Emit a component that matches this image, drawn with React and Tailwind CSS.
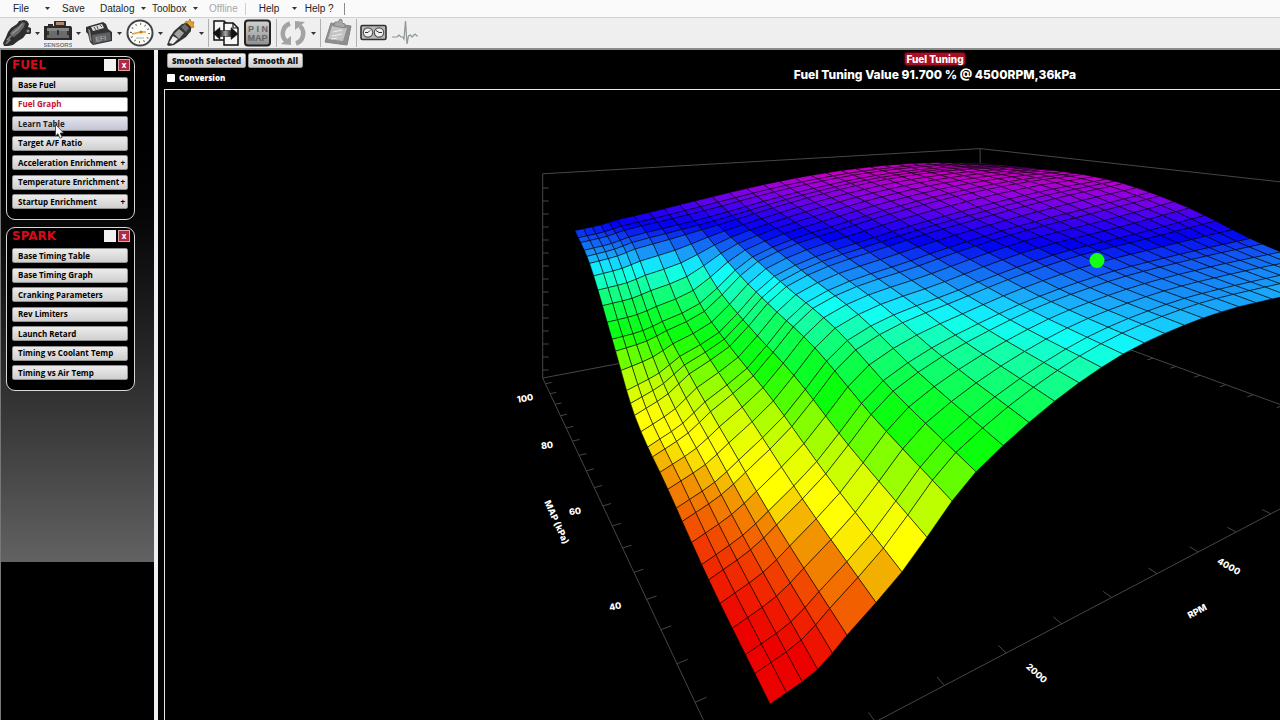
import React, { useState } from 'react';

const MENUS = [
  { label: 'File', width: 'w-[49px]', caret: 'pr-[12px]' },
  { label: 'Save', width: 'w-[38px]' },
  { label: 'Datalog', width: 'w-[52px]', caret: 'pr-[6px]' },
  { label: 'Toolbox', width: 'w-[52px]', caret: 'pr-[6px]' },
];

const FUEL_ITEMS = [
  { label: 'Base Fuel' },
  { label: 'Fuel Graph' },
  { label: 'Learn Table' },
  { label: 'Target A/F Ratio' },
  { label: 'Acceleration Enrichment', more: true },
  { label: 'Temperature Enrichment', more: true },
  { label: 'Startup Enrichment', more: true },
];

const SPARK_ITEMS = [
  { label: 'Base Timing Table' },
  { label: 'Base Timing Graph' },
  { label: 'Cranking Parameters' },
  { label: 'Rev Limiters' },
  { label: 'Launch Retard' },
  { label: 'Timing vs Coolant Temp' },
  { label: 'Timing vs Air Temp' },
];

/* ---------- surface data ---------- */

// rpm breakpoints, measured from the corner of the box
const RPM = [
  245, 345, 443, 541, 638, 735, 936, 1124, 1313, 1511, 1709, 1943, 2178, 2422, 2666, 2900,
  3137, 3380, 3625, 3870, 4113, 4362, 4612, 4861, 5110, 5360, 5610, 5860, 6110, 6360, 6610,
];

const MAP_STEPS = [3, 2, 3, 3, 3, 2, 3, 3, 2, 3, 3, 3, 2, 3, 3, 2, 2, 3, 3, 2, 3, 3, 3, 3, 3, 2, 2, 3, 2, 3];
const MAP = MAP_STEPS.reduce((list, step) => [...list, list[list.length - 1] + step], [67.4]);

const KNOT_COLS = [0, 3, 5, 7, 10, 15, 20, 25, 30];
const KNOT_ROWS = [0, 5, 10, 15, 20, 25, 30];

// one line per knot column, low MAP to high MAP
const HEIGHTS = [
  [0.07, 0.107, 0.157, 0.211, 0.327, 0.47, 0.53],
  [0.089, 0.135, 0.187, 0.245, 0.336, 0.482, 0.54],
  [0.122, 0.165, 0.22, 0.283, 0.352, 0.497, 0.552],
  [0.187, 0.233, 0.288, 0.332, 0.385, 0.515, 0.567],
  [0.311, 0.362, 0.425, 0.462, 0.497, 0.545, 0.593],
  [0.433, 0.457, 0.49, 0.533, 0.57, 0.607, 0.64],
  [0.478, 0.5, 0.54, 0.58, 0.62, 0.65, 0.668],
  [0.479, 0.515, 0.565, 0.618, 0.65, 0.665, 0.672],
  [0.468, 0.52, 0.594, 0.645, 0.659, 0.655, 0.65],
];

const RAMP = [
  [0.09, 236, 0, 0],
  [0.12, 240, 48, 0],
  [0.145, 242, 100, 0],
  [0.17, 242, 155, 0],
  [0.182, 245, 200, 0],
  [0.195, 255, 255, 0],
  [0.215, 255, 255, 0],
  [0.26, 185, 255, 0],
  [0.3, 95, 255, 0],
  [0.33, 10, 255, 10],
  [0.365, 10, 255, 50],
  [0.395, 15, 255, 110],
  [0.425, 20, 255, 170],
  [0.45, 15, 255, 245],
  [0.466, 20, 220, 255],
  [0.482, 25, 170, 250],
  [0.5, 20, 120, 245],
  [0.52, 15, 65, 240],
  [0.542, 0, 0, 240],
  [0.57, 45, 0, 240],
  [0.6, 110, 0, 232],
  [0.63, 155, 0, 220],
  [0.66, 195, 0, 195],
];

const BOX = { rpm: 7088, map: 158, top: 0.697 };

function hermite(xs, ys, x) {
  const n = xs.length;
  let k = 0;
  while (k < n - 2 && x > xs[k + 1]) k++;
  const secant = (i) => (ys[i + 1] - ys[i]) / (xs[i + 1] - xs[i]);
  const slope = (i) => {
    if (i === 0) return secant(0);
    if (i === n - 1) return secant(n - 2);
    return (ys[i + 1] - ys[i - 1]) / (xs[i + 1] - xs[i - 1]);
  };
  const d = xs[k + 1] - xs[k];
  const t = (x - xs[k]) / d;
  const t2 = t * t;
  const t3 = t2 * t;
  return (
    (2 * t3 - 3 * t2 + 1) * ys[k] +
    (t3 - 2 * t2 + t) * d * slope(k) +
    (3 * t2 - 2 * t3) * ys[k + 1] +
    (t3 - t2) * d * slope(k + 1)
  );
}

function heightAt(i, j) {
  const rows = KNOT_ROWS.map((r) => MAP[r]);
  const cols = KNOT_COLS.map((c) => RPM[c]);
  return hermite(cols, HEIGHTS.map((line) => hermite(rows, line, MAP[j])), RPM[i]);
}

function project(r, m, h) {
  const w = 1.90476e-7 * r + 2.15983e-5 * m;
  return [(3.973e-4 * r + 0.0087473 * m + 0.46991) / w, 85 + (1 - h) / w];
}

function rampColor(h) {
  if (h <= RAMP[0][0]) return `rgb(${RAMP[0].slice(1).join(',')})`;
  const k = RAMP.findIndex((stop) => stop[0] >= h);
  if (k === -1) return `rgb(${RAMP[RAMP.length - 1].slice(1).join(',')})`;
  const a = RAMP[k - 1];
  const b = RAMP[k];
  const t = (h - a[0]) / (b[0] - a[0]);
  const mix = [1, 2, 3].map((c) => Math.round(a[c] + (b[c] - a[c]) * t));
  return `rgb(${mix.join(',')})`;
}

const fmt = (points) => points.map((p) => `${p[0].toFixed(1)},${p[1].toFixed(1)}`).join(' ');

// cells are listed far to near so that the near ones cover the far ones
function buildCells() {
  const h = RPM.map((_, i) => MAP.map((_, j) => heightAt(i, j)));
  const at = (i, j) => project(RPM[i], MAP[j], h[i][j]);
  const cells = [];
  for (let i = RPM.length - 2; i >= 0; i--) {
    for (let j = MAP.length - 2; j >= 0; j--) {
      const mean = (h[i][j] + h[i + 1][j] + h[i][j + 1] + h[i + 1][j + 1]) / 4;
      const far = RPM[i] / 6610 + (MAP[j] - 67) / 80;
      cells.push({
        key: `${i}-${j}`,
        points: fmt([at(i, j), at(i + 1, j), at(i + 1, j + 1), at(i, j + 1)]),
        fill: rampColor(mean),
        line: far > 1.3 ? 0.6 : 0.7,
      });
    }
  }
  return cells;
}

const CELLS = buildCells();

const Segment = ({ from, to }) => (
  <line x1={from[0]} y1={from[1]} x2={to[0]} y2={to[1]} stroke="#464646" strokeWidth="1" />
);

const AxisLabel = ({ x, y, turn, children }) => (
  <text
    transform={`translate(${x} ${y}) rotate(${turn})`}
    textAnchor="middle"
    dominantBaseline="central"
    fill="#fff"
    className="font-['Inter'] text-[9px] font-extrabold"
  >
    {children}
  </text>
);

const SurfaceChart = () => {
  const floor = project(0, BOX.map, 0);
  const roof = project(0, BOX.map, BOX.top);
  const mapTicks = Array.from({ length: 17 }, (_, k) => 155 - 5 * k);
  const rpmTicks = Array.from({ length: 10 }, (_, k) => 839 + 500 * k);
  const backTicks = Array.from({ length: 7 }, (_, k) => 112 - 5 * k);
  return (
    <svg viewBox="165 90 1115 630" className="block w-full" role="img" aria-label="Fuel table surface">
      <Segment from={roof} to={floor} />
      <Segment from={roof} to={project(BOX.rpm, BOX.map, BOX.top)} />
      <Segment from={floor} to={project(BOX.rpm, BOX.map, 0)} />
      <Segment from={project(BOX.rpm, BOX.map, BOX.top)} to={project(BOX.rpm, BOX.map, 0)} />
      <Segment from={project(BOX.rpm, BOX.map, BOX.top)} to={project(BOX.rpm, 65.3, BOX.top)} />
      <Segment from={project(BOX.rpm, BOX.map, 0)} to={project(BOX.rpm, 65.3, 0)} />
      <Segment from={floor} to={project(0, 65.3, 0)} />
      <Segment from={project(0, 65.3, 0)} to={project(BOX.rpm, 65.3, 0)} />

      {Array.from({ length: 15 }, (_, k) => (
        <Segment key={k} from={[floor[0], 188 + 13 * k]} to={[floor[0] + 6, 188 + 13 * k]} />
      ))}
      {mapTicks.map((m) => (
        <Segment key={m} from={project(0, m, 0)} to={project(70, m, 0)} />
      ))}
      {rpmTicks.map((r) => (
        <Segment key={r} from={project(r, 65.3, 0)} to={project(r, 66.4, 0)} />
      ))}
      {backTicks.map((m) => (
        <Segment key={m} from={project(BOX.rpm, m, 0)} to={project(BOX.rpm - 120, m, 0)} />
      ))}

      {CELLS.map((c) => (
        <polygon
          key={c.key}
          points={c.points}
          fill={c.fill}
          stroke="#000"
          strokeWidth={c.line}
          strokeOpacity="0.75"
          strokeLinejoin="round"
        />
      ))}

      <circle cx="1097" cy="260.500" r="7.500" fill="#14ff14" />

      <AxisLabel x={525} y={398} turn={-10}>100</AxisLabel>
      <AxisLabel x={547} y={445} turn={-8}>80</AxisLabel>
      <AxisLabel x={575} y={511} turn={-8}>60</AxisLabel>
      <AxisLabel x={615} y={606} turn={-12}>40</AxisLabel>
      <AxisLabel x={557} y={522} turn={66}>MAP (kPa)</AxisLabel>
      <AxisLabel x={1197} y={611} turn={-28}>RPM</AxisLabel>
      <AxisLabel x={1037} y={673} turn={42}>2000</AxisLabel>
      <AxisLabel x={1229} y={566} turn={30}>4000</AxisLabel>
    </svg>
  );
};

/* ---------- toolbar icons ---------- */

const InjectorIcon = () => (
  <svg viewBox="0 0 28 30" className="h-[30px] w-[28px]" aria-hidden="true">
    <path d="M1 28l-1-3 3-6 2-5 3-4 6-4 2-3 5-1 3 1 2 3-1 3 3 1 1 4-2 2-4 0-3 4-5 3-5 4-5 1z" fill="#2e2e2e" />
    <path d="M7 15l4-4 6-4 2-3 3 1-1 4-5 6-5 4-3-1z" fill="#6a6a6a" />
    <path d="M9 16l6-5 4-5M4 22l4-4" stroke="#9a9a9a" strokeWidth="1.200" fill="none" />
    <path d="M2 26l4-6 2 2-4 4z" fill="#777" />
    <circle cx="25" cy="13" r="1.500" fill="#8a8a8a" />
  </svg>
);

const SensorsIcon = () => (
  <svg viewBox="0 0 28 30" className="h-[30px] w-[28px]" aria-hidden="true">
    <path d="M10 3h12v6H10z" fill="#3a2a22" />
    <path d="M12 4h8v3h-8z" fill="#b08a6c" />
    <path d="M0 8h4V6h5v2h18l1 2v12H0z" fill="#2a2a2a" />
    <path d="M3 10h22v10H3z" fill="#6b6b6b" />
    <path d="M3 10h22v3H3z" fill="#878787" />
    <path d="M4 13v4M14 12v5M24 13v4" stroke="#222" strokeWidth="1.500" />
    <text x="14" y="28.500" textAnchor="middle" fill="#777" className="font-['Liberation_Sans'] text-[6px] font-bold">
      SENSORS
    </text>
  </svg>
);

const EfiIcon = () => (
  <svg viewBox="0 0 28 30" className="h-[30px] w-[28px]" aria-hidden="true">
    <path d="M1 9l17-5 3 2 2 5 4 3 0 9-19 4-3-3-2-8-2-2z" fill="#333" />
    <path d="M6 9l11-3 2 4-11 3z" fill="#ddd" />
    <path d="M9 9l2 3M12 8l1 3M15 7l2 2" stroke="#555" />
    <path d="M7 17l18-3 1 8-18 4z" fill="#606060" />
    <path d="M3 11l2 1 2 12-2-2z" fill="#888" />
    <text x="16" y="23" transform="rotate(-8 16 22)" textAnchor="middle" fill="#a0a0a0" className="font-['Liberation_Sans'] text-[7px] font-bold">
      EFI
    </text>
  </svg>
);

const GaugeIcon = () => (
  <svg viewBox="0 0 28 30" className="h-[30px] w-[28px]" aria-hidden="true">
    <circle cx="14" cy="15" r="12.500" fill="#fdfdf8" stroke="#3f4347" strokeWidth="2" />
    <circle cx="14" cy="15" r="9" fill="none" stroke="#666" strokeWidth="2" strokeDasharray="1 3.700" />
    <path d="M6 16l9-2 5 0" stroke="#e0a030" strokeWidth="1.500" fill="none" />
    <circle cx="15" cy="14" r="1.500" fill="#c87818" />
    <path d="M10 20h8" stroke="#aaa" />
  </svg>
);

const SparkIcon = () => (
  <svg viewBox="0 0 28 30" className="h-[30px] w-[28px]" aria-hidden="true">
    <path d="M17 6l2-3 2 1 2-3 1 3 3 0-1 3 1 2-3 1-1 2z" fill="#e5a32a" stroke="#8a5a10" strokeWidth=".6" />
    <path d="M0 27l3-8 4-6 8-7 5-1 4 4 0 4-5 6-6 4-6 4-5 1z" fill="#333" />
    <path d="M2 25l4-7 5 3-5 5z" fill="#eee" />
    <path d="M7 16l5-5 5 4-5 6z" fill="#a2a2a2" />
    <path d="M14 9l4-3 4 4-3 4z" fill="#6c6c6c" />
  </svg>
);

const TransferIcon = () => (
  <svg viewBox="0 0 28 30" className="h-[30px] w-[28px]" aria-hidden="true">
    <defs>
      <linearGradient id="swap">
        <stop offset="0.250" stopColor="#111" />
        <stop offset="0.500" stopColor="#aaa" />
        <stop offset="0.750" stopColor="#111" />
      </linearGradient>
    </defs>
    <path d="M2 3h10l3 3v16H2z" fill="#f6f6f6" stroke="#111" strokeWidth="1.500" />
    <path d="M12 5h9l5 5v17H12z" fill="#f6f6f6" stroke="#111" strokeWidth="1.500" />
    <path d="M21 5v5h5" fill="none" stroke="#111" strokeWidth="1.200" />
    <path d="M1 15l7-5.500v3h11v-3l7 6.500-7 5.500v-3H8v3z" fill="url(#swap)" stroke="#111" strokeWidth=".5" />
  </svg>
);

const PinMapIcon = () => (
  <svg viewBox="0 0 28 30" className="h-[30px] w-[28px]" aria-hidden="true">
    <defs>
      <linearGradient id="pin" x1="0" y1="0" x2="0" y2="1">
        <stop offset="0" stopColor="#d2d2d2" />
        <stop offset="1" stopColor="#8e8e8e" />
      </linearGradient>
    </defs>
    <rect x="1" y="2.500" width="25" height="25" rx="3" fill="url(#pin)" stroke="#222" strokeWidth="2" />
    <text x="14" y="13.500" textAnchor="middle" fill="#666" className="font-['Liberation_Sans'] text-[9px] font-bold">
      P I N
    </text>
    <text x="13.500" y="22.500" textAnchor="middle" fill="#666" className="font-['Liberation_Sans'] text-[9px] font-bold">
      MAP
    </text>
  </svg>
);

const SyncIcon = () => (
  <svg viewBox="0 0 28 30" className="h-[30px] w-[28px]" aria-hidden="true">
    <path d="M11 5.500A10.500 10.500 0 0 0 7 23" fill="none" stroke="#a3a3a3" strokeWidth="4.500" />
    <path d="M2 26l10 1 0-9z" fill="#a3a3a3" />
    <path d="M17 25.500A10.500 10.500 0 0 0 21 8" fill="none" stroke="#a3a3a3" strokeWidth="4.500" />
    <path d="M26 4l-10-1 0 9z" fill="#a3a3a3" />
  </svg>
);

const ClipboardIcon = () => (
  <svg viewBox="0 0 28 30" className="h-[30px] w-[28px]" aria-hidden="true">
    <path d="M7 5l20 3-4 19-22-3z" fill="#8f8f8f" stroke="#848484" strokeLinejoin="round" />
    <path d="M8 8l15 2-4 13-15-2z" fill="#c4c4c4" />
    <path d="M10 8l1-4 3 0 2-3 2 1 0 3 3 1 0 4z" fill="#a8a8a8" stroke="#858585" />
    <path d="M9 14l9-2M8 18l10-2M7 21l6-1" stroke="#f2f2f2" />
  </svg>
);

const DashIcon = () => (
  <svg viewBox="0 0 28 30" className="h-[30px] w-[28px]" aria-hidden="true">
    <rect x="1" y="7.500" width="25" height="14" rx="1.500" fill="#b9b9b9" stroke="#2d3238" strokeWidth="1.600" />
    <circle cx="8" cy="14.500" r="4.700" fill="#eee" stroke="#555" strokeWidth="1.200" />
    <circle cx="19" cy="14.500" r="4.700" fill="#eee" stroke="#555" strokeWidth="1.200" />
    <path d="M5 14.500h3l2-2M16 12.500l3 2h3" stroke="#333" fill="none" />
  </svg>
);

const PulseIcon = () => (
  <svg viewBox="0 0 28 30" className="h-[30px] w-[28px]" aria-hidden="true">
    <path
      d="M0 19h5l2-2 2 2h2l1 2L13.500 3l1.500 23 1.500-8 2-1 1.500 2 3-3 2 2h1"
      fill="none"
      stroke="#8d9594"
      strokeWidth="1.200"
    />
  </svg>
);

const Caret = () => (
  <svg viewBox="0 0 5 3" className="h-[3px] w-[5px] shrink-0" aria-hidden="true">
    <path d="M0 0h5L2.500 3z" fill="#333" />
  </svg>
);

const Rule = () => <span className="h-[28px] w-px bg-[#b0b0b0]" />;

const ToolButton = ({ name, caret, children }) => (
  <button type="button" aria-label={name} className="flex items-center gap-[4px] pr-[4px]">
    {children}
    {caret && <Caret />}
  </button>
);

const MenuBar = () => (
  <nav className="flex h-[18px] items-center border-b border-[#d0d0d0] bg-[#fafafa] pl-[13px] text-[10px] text-[#222]">
    {MENUS.map((menu) => (
      <button
        key={menu.label}
        type="button"
        className={`flex items-center justify-between text-left ${menu.width}`}
      >
        {menu.label}
        {menu.caret && (
          <span className={menu.caret}>
            <Caret />
          </span>
        )}
      </button>
    ))}
    <button type="button" disabled className="ml-[5px] text-[#a8a8a8]">
      Offline
    </button>
    <span className="ml-[7px] h-[12px] w-px bg-[#cfcfcf]" />
    <button type="button" className="ml-[13px] flex w-[38px] items-center justify-between text-left">
      Help
      <Caret />
    </button>
    <button type="button" className="ml-[8px]">
      Help ?
    </button>
    <span className="ml-[10px] h-[12px] w-px bg-[#8a8a8a]" />
  </nav>
);

const ToolBar = () => (
  <div className="flex h-[32px] items-center border-b-2 border-[#8c8c8c] bg-[#efefef] pl-[3px]">
    <ToolButton name="Injector" caret><InjectorIcon /></ToolButton>
    <ToolButton name="Sensors" caret><SensorsIcon /></ToolButton>
    <ToolButton name="ECU" caret><EfiIcon /></ToolButton>
    <ToolButton name="Gauges" caret><GaugeIcon /></ToolButton>
    <ToolButton name="Ignition" caret><SparkIcon /></ToolButton>
    <Rule />
    <div className="flex items-center pl-[3px]">
      <ToolButton name="Transfer"><TransferIcon /></ToolButton>
      <ToolButton name="Pin map"><PinMapIcon /></ToolButton>
    </div>
    <Rule />
    <div className="flex items-center pl-[2px]">
      <ToolButton name="Sync" caret><SyncIcon /></ToolButton>
    </div>
    <Rule />
    <div className="flex items-center pl-[3px]">
      <ToolButton name="Notes"><ClipboardIcon /></ToolButton>
    </div>
    <Rule />
    <div className="flex items-center pl-[3px]">
      <ToolButton name="Dashboard"><DashIcon /></ToolButton>
      <ToolButton name="Live data"><PulseIcon /></ToolButton>
    </div>
  </div>
);

const Pointer = () => (
  <svg viewBox="0 0 10 15" className="absolute top-[8px] left-[43px] z-10 h-[15px] w-[10px]" aria-hidden="true">
    <path d="M.5.500v11.500l2.500-2.300 1.900 4.500 2.200-.9-1.900-4.300h3.500z" fill="#fff" stroke="#333" strokeWidth=".8" />
  </svg>
);

const Panel = ({ title, items, active, onSelect, hovered }) => (
  <section className="rounded-[9px] border border-[#d8d8d8] bg-black pr-[4px] pb-[10px] pl-[5px]">
    <header className="mb-[4px] flex h-[16px] items-center justify-between">
      <h2 className="font-['DejaVu_Sans'] text-[12px] leading-[16px] font-bold text-[#d40c18]">{title}</h2>
      <div className="flex gap-[2px]">
        <button type="button" aria-label={`Minimize ${title}`} className="size-[12px] bg-[#f2f2f2]" />
        <button
          type="button"
          aria-label={`Close ${title}`}
          className="flex size-[12px] items-center justify-center border border-[#e0a0a8] bg-[#b02a40] text-[8px] leading-[8px] font-bold text-white"
        >
          x
        </button>
      </div>
    </header>
    <ul className="mr-[2px] flex h-[132px] flex-col justify-between">
      {items.map((item) => (
        <li key={item.label} className="relative">
          <button
            type="button"
            onClick={() => onSelect(item.label)}
            className={`flex h-[15px] w-full items-center justify-between rounded-[2px] border border-[#909090] pr-[2px] pl-[5px] text-[8px] leading-[12px] font-bold whitespace-nowrap ${
              item.label === active
                ? 'bg-white text-[#c8102e]'
                : item.label === hovered
                  ? 'bg-linear-to-b from-[#e4e4ee] to-[#c4c4d4] text-[#222]'
                  : 'bg-linear-to-b from-[#ececec] to-[#cfcfcf] text-black'
            }`}
          >
            <span>{item.label}</span>
            {item.more && <span>+</span>}
          </button>
          {item.label === hovered && <Pointer />}
        </li>
      ))}
    </ul>
  </section>
);

const Sidebar = () => {
  const [active, setActive] = useState('Fuel Graph');
  return (
    <aside className="w-[154px] shrink-0 border-l border-[#777] bg-black font-['Open_Sans',sans-serif]">
      <div className="flex h-[512px] flex-col gap-[7px] bg-linear-to-b from-black from-10% to-[#626262] pt-[6px] pr-[19px] pl-[5px]">
        <Panel title="FUEL" items={FUEL_ITEMS} active={active} onSelect={setActive} hovered="Learn Table" />
        <Panel title="SPARK" items={SPARK_ITEMS} active={active} onSelect={setActive} />
      </div>
    </aside>
  );
};

const SmoothButton = ({ children }) => (
  <button
    type="button"
    className="h-[15px] rounded-[2px] border border-[#9a9a9a] bg-linear-to-b from-[#f4f4f4] to-[#cfcfcf] px-[4px] text-[8px] leading-[12px] font-extrabold text-[#111]"
  >
    {children}
  </button>
);

const App = () => {
  const [conversion, setConversion] = useState(false);

  return (
    <div className="flex min-h-screen flex-col overflow-hidden bg-black font-['Liberation_Sans',sans-serif]">
      <MenuBar />
      <ToolBar />
      <div className="flex flex-1">
        <Sidebar />
        <div className="w-[4px] shrink-0 bg-[#f0eef2]" />
        <main className="min-w-0 flex-1 pl-[6px]">
          <div className="flex h-[39px]">
            <div className="w-[426px] shrink-0 pt-[3px] pl-[3px] font-['Open_Sans',sans-serif]">
              <div className="flex gap-[2px]">
                <SmoothButton>Smooth Selected</SmoothButton>
                <SmoothButton>Smooth All</SmoothButton>
              </div>
              <label className="mt-[4px] flex items-center gap-[4px] text-[8px] leading-[12px] font-extrabold text-white">
                <input
                  type="checkbox"
                  checked={conversion}
                  onChange={(e) => setConversion(e.target.checked)}
                  className="size-[8px] appearance-none rounded-[1px] bg-white checked:bg-[#c8102e]"
                />
                Conversion
              </label>
            </div>
            <div className="flex-1 pt-[2px] text-center font-['Inter',sans-serif] font-extrabold text-white">
              <h1 className="text-[10px] leading-[14px]">
                <span className="rounded-[2px] bg-[#a80f24] px-[1px] shadow-[0_0_3px_#c8102e]">Fuel Tuning</span>
              </h1>
              <p className="text-[12px] leading-[18px]">Fuel Tuning Value 91.700 % @ 4500RPM,36kPa</p>
            </div>
          </div>
          <div className="border-t border-l border-[#e8e8e8]">
            <SurfaceChart />
          </div>
        </main>
      </div>
    </div>
  );
};

export default App;
